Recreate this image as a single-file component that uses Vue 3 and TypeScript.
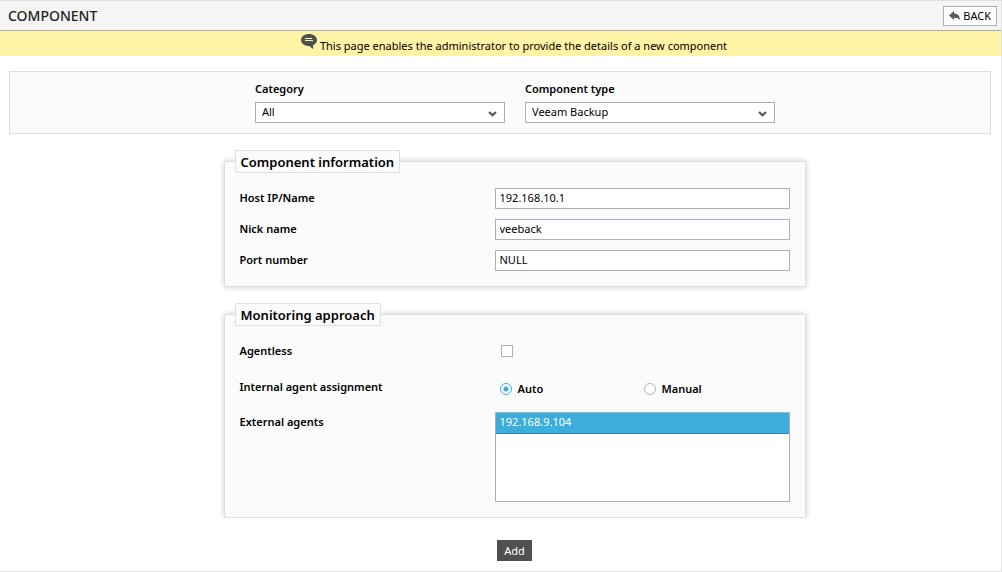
<script setup lang="ts">
import { ref } from 'vue'

interface TextField {
  id: string
  label: string
  value: string
}

const category = ref('All')
const componentType = ref('Veeam Backup')
const fields = ref<TextField[]>([
  { id: 'host', label: 'Host IP/Name', value: '192.168.10.1' },
  { id: 'nick', label: 'Nick name', value: 'veeback' },
  { id: 'port', label: 'Port number', value: 'NULL' },
])
const agentless = ref(false)
const assignment = ref('auto')
const agents = ['192.168.9.104']
const selectedAgents = ref<string[]>(['192.168.9.104'])
</script>

<template>
  <div class="page">
    <header class="header">
      <h1>COMPONENT</h1>
      <button type="button" class="back">
        <svg width="11" height="10" viewBox="0 0 11 10" aria-hidden="true">
          <path d="M0 4.500 5 0v2.500c3.800 0 5.800 2.200 6 6.500C9.700 7.400 8.200 6.700 5 6.700V9z" fill="#5c5c5c" />
        </svg>
        <span>BACK</span>
      </button>
    </header>

    <div class="banner">
      <svg width="16" height="15" viewBox="0 0 16 15" aria-hidden="true">
        <path d="M8 0c4.500 0 8 2.600 8 6 0 2.200-1.400 4-3.700 5.100L12 15l-3.700-3H8c-4.500 0-8-2.600-8-6s3.500-6 8-6z" fill="#505050" />
        <path d="M4 4.500h7M4 6.500h8" stroke="#fff3a5" stroke-width="1" />
      </svg>
      <p>This page enables the administrator to provide the details of a new component</p>
    </div>

    <section class="filters">
      <div class="filter">
        <label for="category">Category</label>
        <div class="select">
          <select id="category" v-model="category">
            <option>All</option>
          </select>
          <svg width="9" height="6" viewBox="0 0 9 6" aria-hidden="true">
            <path d="M1 1l3.500 3.300L8 1" fill="none" stroke="#505258" stroke-width="2" />
          </svg>
        </div>
      </div>
      <div class="filter">
        <label for="type">Component type</label>
        <div class="select">
          <select id="type" v-model="componentType">
            <option>Veeam Backup</option>
          </select>
          <svg width="9" height="6" viewBox="0 0 9 6" aria-hidden="true">
            <path d="M1 1l3.500 3.300L8 1" fill="none" stroke="#505258" stroke-width="2" />
          </svg>
        </div>
      </div>
    </section>

    <form @submit.prevent>
      <div class="groups">
        <fieldset>
          <legend>Component information</legend>
          <div class="rows">
            <div v-for="field in fields" :key="field.id" class="row">
              <label class="name" :for="field.id">{{ field.label }}</label>
              <input :id="field.id" v-model="field.value" class="text" type="text" />
            </div>
          </div>
        </fieldset>

        <fieldset>
          <legend>Monitoring approach</legend>
          <div class="rows">
            <div class="row check-row">
              <label class="name" for="agentless">Agentless</label>
              <input id="agentless" v-model="agentless" class="check" type="checkbox" />
            </div>
            <div class="row" role="radiogroup" aria-labelledby="assignment">
              <span id="assignment" class="name">Internal agent assignment</span>
              <div class="choices">
                <label><input v-model="assignment" type="radio" name="assignment" value="auto" />Auto</label>
                <label><input v-model="assignment" type="radio" name="assignment" value="manual" />Manual</label>
              </div>
            </div>
            <div class="row">
              <label class="name" for="agents">External agents</label>
              <select id="agents" v-model="selectedAgents" class="list" multiple size="4">
                <option v-for="agent in agents" :key="agent">{{ agent }}</option>
              </select>
            </div>
          </div>
        </fieldset>
      </div>
      <button type="submit" class="add">Add</button>
    </form>
  </div>
</template>

<style>
body {
  margin: 0;
  background: #fff;
}
</style>

<style scoped>
* {
  box-sizing: border-box;
}

.page {
  min-height: 100vh;
  border: 1px solid #e0e0e0;
  border-left: 0;
  background: #fff;
  color: #000;
  font-family: "Noto Sans", "Open Sans", sans-serif;
  font-size: 11px;
  line-height: 21px;
}

input,
select,
button {
  margin: 0;
  border-radius: 0;
  color: inherit;
  font: inherit;
}

.header {
  display: flex;
  align-items: center;
  justify-content: space-between;
  height: 30px;
  padding: 0 4px 0 8px;
  border-bottom: 1px solid #a9adb8;
  background: #f5f5f5;
}

h1 {
  margin: 0;
  color: #222;
  font-size: 14px;
  font-weight: 500;
}

.back {
  display: flex;
  align-items: center;
  gap: 3px;
  height: 20px;
  padding: 0 5px;
  border: 1px solid #abb0be;
  background: #fff;
}

.banner {
  display: flex;
  justify-content: center;
  gap: 3px;
  height: 25px;
  padding: 3px 0 0 27px;
  background: #fff3a5;
}

.banner p {
  margin: 0;
  padding-top: 1px;
}

.filters {
  display: flex;
  justify-content: center;
  gap: 20px;
  margin: 15px 10px 0 9px;
  padding: 6px 0 10px 30px;
  border: 1px solid #dcdcdc;
  background: #fbfbfb;
}

.filter {
  width: 250px;
}

.filter label {
  display: block;
  height: 24px;
  font-weight: 600;
}

.select {
  position: relative;
}

.select select {
  display: block;
  width: 100%;
  height: 21px;
  padding: 0 20px 2px 6px;
  border: 1px solid #abb0be;
  background: #fff;
  line-height: 17px;
  appearance: none;
}

.select svg {
  position: absolute;
  top: 9px;
  right: 8px;
  pointer-events: none;
}

form {
  display: flex;
  flex-direction: column;
  align-items: center;
  padding-left: 28px;
}

.groups {
  display: flex;
  flex-direction: column;
  gap: 16px;
  width: 100%;
  max-width: 602px;
  padding: 16px 10px 0;
  overflow: hidden;
}

fieldset {
  min-width: 0;
  margin: 0;
  padding: 0 15px 15px;
  border: 1px solid #e0e0e0;
  background: #fbfbfb;
  box-shadow: 0 0 6px rgba(0, 0, 0, 0.2);
}

legend {
  height: 23px;
  margin-left: -5px;
  padding: 1px 5px 0;
  border: 1px solid #e0e0e0;
  background: #fbfbfb;
  font-size: 13px;
  font-weight: 600;
}

.rows {
  display: flex;
  flex-direction: column;
  gap: 10px;
  padding-top: 15px;
}

.row {
  display: grid;
  grid-template-columns: 255px 1fr;
  align-items: start;
}

.name {
  font-weight: 600;
  line-height: 19px;
}

.text {
  width: 100%;
  height: 21px;
  padding: 0 4px 2px;
  border: 1px solid #abb0be;
  background: #fff;
  line-height: 17px;
}

.check-row {
  min-height: 26px;
}

.check {
  width: 12px;
  height: 12px;
  margin: 4px 0 0 6px;
  border: 1px solid #abb0be;
  background: #fff;
  appearance: none;
}

.check:checked {
  background: #3baedb;
}

.choices {
  display: grid;
  grid-template-columns: 144px 1fr;
  height: 25px;
  padding: 0 0 2px 5px;
}

.choices label {
  display: flex;
  align-items: center;
  gap: 6px;
  font-weight: 600;
}

.choices input {
  width: 12px;
  height: 12px;
  border: 1px solid #abb0be;
  border-radius: 50%;
  background: #fff;
  appearance: none;
}

.choices input:checked {
  border-color: #3baedb;
  background: radial-gradient(circle, #3baedb 0 2px, #fff 3px);
}

.list {
  display: block;
  width: 100%;
  height: 90px;
  padding: 0;
  border: 1px solid #abb0be;
  background: #fff;
  overflow: auto;
}

.list option {
  height: 21px;
  padding: 1px 4px 0;
  line-height: 19px;
}

.list option:checked {
  border-bottom: 1px solid #2389c2;
  background: #3baedb linear-gradient(#3baedb, #3baedb);
  color: #fff;
  -webkit-text-fill-color: #fff;
}

.add {
  min-width: 35px;
  height: 21px;
  margin: 22px 0 10px;
  padding: 0 7px;
  border: 0;
  background: #505050;
  color: #fff;
}
</style>
